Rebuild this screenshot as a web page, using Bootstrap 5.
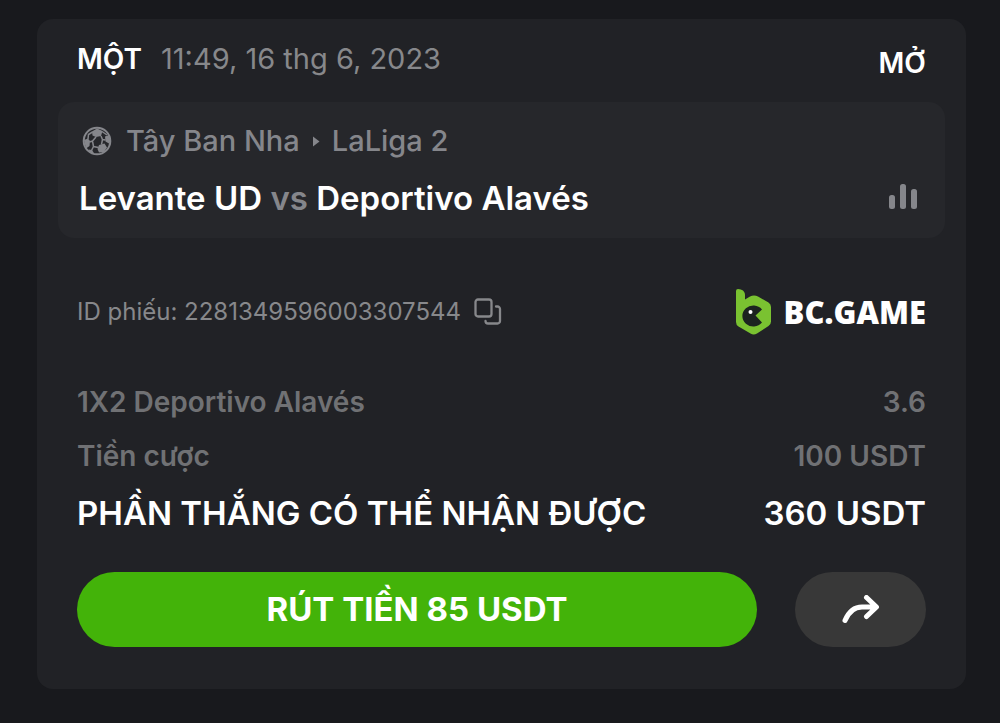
<!DOCTYPE html>
<html lang="vi">
<head>
<meta charset="utf-8">
<meta name="viewport" content="width=device-width, initial-scale=1">
<title>BC.GAME – Phiếu cược</title>
<link href="https://cdn.jsdelivr.net/npm/bootstrap@5.3.0/dist/css/bootstrap.min.css" rel="stylesheet">
<style>
  body { background: #18191d; color: #fff; font-family: Inter, "Liberation Sans", sans-serif; font-size: 29px; line-height: 36px; }
  .slip-page { padding: 19px 34px 34px 37px; }
  .slip { background: #212226; border-radius: 16px; padding: 22px 21px 42px; }
  .slip-inset { padding-left: 19px; padding-right: 19px; }
  .slip-head { padding-bottom: 21px; }
  .slip-when { gap: 19px; }
  .slip-label, .slip-line { font-size: 28px; }
  .slip-status { padding-top: 4px; }
  .tone-date { color: #87888b; }
  .tone-league { color: #85868b; }
  .tone-dim { color: #707174; }
  .match-panel { background: #26272b; border-radius: 16px; padding: 21px 28px 18px 21px; }
  .match-league { gap: 14px; padding-left: 3px; }
  .league-path { gap: 12px; }
  .match-row { margin-top: 18px; padding-bottom: 1px; }
  .match-title { font-size: 33px; line-height: 42px; }
  .ticket-row { padding-top: 51px; padding-bottom: 49px; }
  .ticket-id { font-size: 24px; gap: 13px; }
  .brand-link { gap: 12px; }
  .brand-name { font-family: "Open Sans", "Noto Sans", sans-serif; font-weight: 800; font-size: 31px; }
  .bet-lines { gap: 18px; }
  .bet-total { font-size: 33px; line-height: 42px; }
  .slip-actions { gap: 38px; padding-top: 38px; }
  .btn-slip { height: 75px; border: 0; --bs-btn-color: #fff; --bs-btn-hover-color: #fff; --bs-btn-active-color: #fff; }
  .btn-cash { --bs-btn-bg: #43b309; --bs-btn-hover-bg: #3da308; --bs-btn-active-bg: #389607; font-size: 33px; }
  .btn-share { --bs-btn-bg: #383838; --bs-btn-hover-bg: #444; --bs-btn-active-bg: #4c4c4c; width: 131px; }
</style>
</head>
<body>
<main class="slip-page">
  <article class="slip">
    <header class="slip-head slip-inset d-flex justify-content-between align-items-start">
      <div class="slip-when d-flex">
        <span class="slip-label fw-semibold">MỘT</span>
        <time class="tone-date" datetime="2023-06-16T11:49">11:49, 16 thg 6, 2023</time>
      </div>
      <span class="slip-label slip-status fw-semibold">MỞ</span>
    </header>

    <section class="match-panel">
      <div class="match-league tone-league fw-medium d-flex align-items-center">
        <svg width="30" height="30" viewBox="0 0 30 30" fill="currentColor" aria-hidden="true">
          <circle cx="15" cy="15" r="13.3" fill="none" stroke="currentColor" stroke-width="2"/>
          <path d="M10 5.500 15 2.500 20.500 5 19 10 14 11 10.500 9.500zM2 14 6 12.500 8 15 7.500 20 4 22.500zM23 10.500 27 9 28.500 15 27 17.500 23.500 15.500zM17 19 22.500 17.500 25 21.500 22 26 17 26.500 15.500 23zM6.500 23.500 10 24 12.500 28 8 26.500z"/>
          <path d="M14 11 10.500 15 7.500 16M19 10 20.500 13.500 23.500 14M20.500 13.500 19.500 18.500M10.500 15 11.500 20.500 16.500 21.500M11.500 20.500 9.500 24.500M6 13 6.500 8.500 10.500 6M20 5.500 25 9" fill="none" stroke="currentColor" stroke-width="1.500"/>
        </svg>
        <div class="league-path d-flex align-items-center">
          <span>Tây Ban Nha</span>
          <svg width="8" height="11" viewBox="0 0 8 11" fill="currentColor" aria-hidden="true"><path d="M1 .5 7.500 5.500 1 10.500z"/></svg>
          <span>LaLiga 2</span>
        </div>
      </div>
      <div class="match-row d-flex justify-content-between align-items-center">
        <h1 class="match-title fw-semibold mb-0">Levante UD <span class="tone-league">vs</span> Deportivo Alavés</h1>
        <button type="button" class="btn p-0 border-0 tone-league d-flex" aria-label="Thống kê">
          <svg width="28" height="28" viewBox="0 0 28 28" fill="currentColor" aria-hidden="true">
            <rect x="0" y="11" width="6" height="14" rx="2.500"/><rect x="11" y="0" width="6" height="25" rx="2.500"/><rect x="22" y="5" width="6" height="20" rx="2.500"/>
          </svg>
        </button>
      </div>
    </section>

    <div class="slip-inset">
      <div class="ticket-row d-flex justify-content-between align-items-center">
        <div class="ticket-id tone-date d-flex align-items-center">
          <span>ID phiếu: 2281349596003307544</span>
          <button type="button" class="btn p-0 border-0 tone-date d-flex" aria-label="Sao chép ID phiếu">
            <svg width="28" height="28" viewBox="0 0 28 28" fill="none" stroke="currentColor" stroke-width="2.300" stroke-linecap="round" aria-hidden="true">
              <rect x="1.500" y="1.500" width="16" height="17" rx="2.500"/><path d="M22 8.500h1.500a2.500 2.500 0 0 1 2.500 2.500v12a2.500 2.500 0 0 1-2.500 2.500H14a2.500 2.500 0 0 1-2.500-2.500"/>
            </svg>
          </button>
        </div>
        <a href="#" class="brand-link d-flex align-items-center text-white text-decoration-none">
          <svg width="36" height="46" viewBox="0 0 36 46" aria-hidden="true">
            <path fill="#7ac231" d="M0 2Q0 0 2 0C6 .3 9 2 9 6V10.500L14 7.500Q18 5.500 22 7.500L32.500 13.500Q35 15 35 18V32.500Q35 35.500 32.500 37L21 44.500Q17.500 46.500 14.500 44.500L2.500 37.500Q0 36 0 33Z"/>
            <path fill="#1c2420" d="M26 20.500 19.500 26.500 26 33.500A11 10.500 0 1 1 26 20.500Z" />
            <circle cx="14.500" cy="23" r="2" fill="#fff"/>
          </svg>
          <span class="brand-name">BC.GAME</span>
        </a>
      </div>

      <div class="bet-lines d-flex flex-column">
        <div class="slip-line tone-dim fw-semibold d-flex justify-content-between"><span>1X2 Deportivo Alavés</span><span>3.6</span></div>
        <div class="slip-line tone-dim fw-semibold d-flex justify-content-between"><span>Tiền cược</span><span>100 USDT</span></div>
        <div class="bet-total fw-semibold d-flex justify-content-between"><span>PHẦN THẮNG CÓ THỂ NHẬN ĐƯỢC</span><span>360 USDT</span></div>
      </div>

      <div class="slip-actions d-flex">
        <button type="button" class="btn btn-slip btn-cash rounded-pill fw-bold flex-grow-1">RÚT TIỀN 85 USDT</button>
        <button type="button" class="btn btn-slip btn-share rounded-pill d-flex align-items-center justify-content-center flex-shrink-0" aria-label="Chia sẻ">
          <svg width="38" height="30" viewBox="0 0 38 30" fill="none" stroke="#fff" stroke-width="5" stroke-linecap="round" stroke-linejoin="round" aria-hidden="true">
            <path d="M3 25.500C7 16 12 12 20 12H33M24.500 2.500 34.500 12 24.500 21.500"/>
          </svg>
        </button>
      </div>
    </div>
  </article>
</main>
<script src="https://cdn.jsdelivr.net/npm/bootstrap@5.3.0/dist/js/bootstrap.bundle.min.js"></script>
</body>
</html>
